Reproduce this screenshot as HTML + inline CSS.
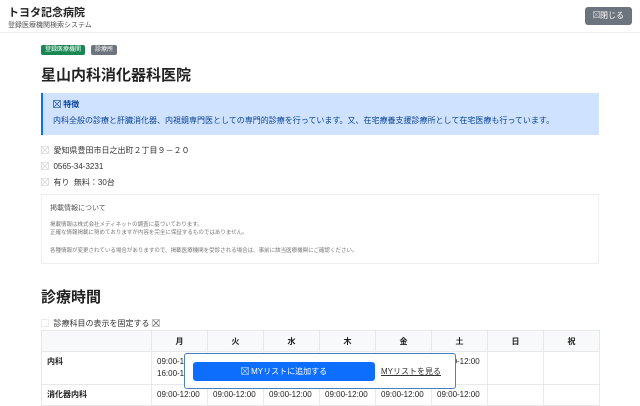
<!DOCTYPE html>
<html><head><meta charset="utf-8"><style>
*{margin:0;padding:0;box-sizing:border-box}
body{width:640px;height:400px;overflow:hidden;background:#fff;font-family:"Liberation Sans","Noto Sans CJK JP",sans-serif;color:#222;position:relative}
.abs{position:absolute;white-space:nowrap}
.x{display:inline-block;width:8px;height:8px;border:1px solid #999;vertical-align:middle;position:relative;top:-1px;background:linear-gradient(45deg,transparent 45%,currentColor 45%,currentColor 55%,transparent 55%),linear-gradient(-45deg,transparent 45%,currentColor 45%,currentColor 55%,transparent 55%);opacity:.6}
table{position:absolute;left:41px;top:330px;border-collapse:collapse;font-size:8px}
td,th{border:1px solid #e8e8e8;height:21px}
th{background:#f8f9fa;font-weight:bold;width:56px}
td{vertical-align:top;padding:4px 5px;line-height:12px}
</style></head><body>
<div class="abs" style="left:8px;top:4px;font-size:11px;font-weight:bold">トヨタ記念病院</div>
<div class="abs" style="left:8px;top:20px;font-size:7px;color:#555">登録医療機関検索システム</div>
<div class="abs" style="left:585px;top:7px;width:47px;height:18px;background:#6c757d;border-radius:3px;color:#fff;font-size:8px;line-height:18px;text-align:center"><span class="x" style="border-color:#ddd;width:7px;height:7px;color:#ddd"></span>閉じる</div>
<div class="abs" style="left:0;top:32px;width:640px;height:1px;background:#eee"></div>
<div class="abs" style="left:41px;top:45px;width:44px;height:10px;background:#198754;border-radius:2px;color:#fff;font-size:6px;line-height:10px;text-align:center">登録医療機関</div>
<div class="abs" style="left:91px;top:45px;width:26px;height:10px;background:#6c757d;border-radius:2px;color:#fff;font-size:6px;line-height:10px;text-align:center">診療所</div>
<div class="abs" style="left:41px;top:64px;font-size:15px;font-weight:bold">星山内科消化器科医院</div>
<div class="abs" style="left:41px;top:93px;width:558px;height:42px;background:#cfe2ff;border-left:2px solid #0d6efd"></div>
<div class="abs" style="left:53px;top:99px;font-size:8px;font-weight:bold;color:#084298"><span class="x" style="border-color:#084298;color:#084298"></span> 特徴</div>
<div class="abs" style="left:53px;top:115px;font-size:8px;color:#084298">内科全般の診療と肝臓消化器、内視鏡専門医としての専門的診療を行っています。又、在宅療養支援診療所として在宅医療も行っています。</div>
<div class="abs" style="left:41px;top:143px;font-size:8px;line-height:16px;color:#333"><span class="x" style="border-color:#ccc;color:#ccc"></span>&nbsp; 愛知県豊田市日之出町２丁目９－２０<br><span class="x" style="border-color:#ccc;color:#ccc"></span>&nbsp; 0565-34-3231<br><span class="x" style="border-color:#ccc;color:#ccc"></span>&nbsp; 有り &nbsp;無料：30台</div>
<div class="abs" style="left:41px;top:194px;width:558px;height:70px;border:1px solid #eee;background:#fff"></div>
<div class="abs" style="left:50px;top:203px;font-size:7px;color:#555">掲載情報について</div>
<div class="abs" style="left:50px;top:221px;font-size:5.5px;color:#777;line-height:8px">掲載情報は株式会社メディネットの調査に基づいております。<br>正確な情報掲載に努めておりますが内容を完全に保証するものではありません。</div>
<div class="abs" style="left:50px;top:246px;font-size:5.5px;color:#777">各種情報が変更されている場合がありますので、掲載医療機関を受診される場合は、事前に該当医療機関にご確認ください。</div>
<div class="abs" style="left:41px;top:286px;font-size:15px;font-weight:bold">診療時間</div>
<div class="abs" style="left:41px;top:318px;font-size:8px;color:#333"><span class="x" style="border-color:#ddd;background:none"></span>&nbsp; 診療科目の表示を固定する <span class="x"></span></div>
<table>
<tr><th style="width:110px;background:#f8f9fa"></th><th>月</th><th>火</th><th>水</th><th>木</th><th>金</th><th>土</th><th>日</th><th>祝</th></tr>
<tr style="height:32px"><td style="font-weight:bold">内科</td><td>09:00-12:00<br>16:00-19:00</td><td></td><td></td><td></td><td></td><td>09:00-12:00</td><td></td><td></td></tr>
<tr><td style="font-weight:bold">消化器内科</td><td>09:00-12:00</td><td>09:00-12:00</td><td>09:00-12:00</td><td>09:00-12:00</td><td>09:00-12:00</td><td>09:00-12:00</td><td></td><td></td></tr>
</table>
<div class="abs" style="left:184px;top:353px;width:272px;height:36px;background:#fff;border:1px solid #4a7fc1;border-radius:3px"></div>
<div class="abs" style="left:193px;top:362px;width:182px;height:19px;background:#0d6efd;border-radius:3px;color:#fff;font-size:8px;line-height:19px;text-align:center"><span class="x" style="border-color:#cde;color:#cde"></span> MYリストに追加する</div>
<div class="abs" style="left:381px;top:366px;font-size:8px;text-decoration:underline;color:#333">MYリストを見る</div>
</body></html>
